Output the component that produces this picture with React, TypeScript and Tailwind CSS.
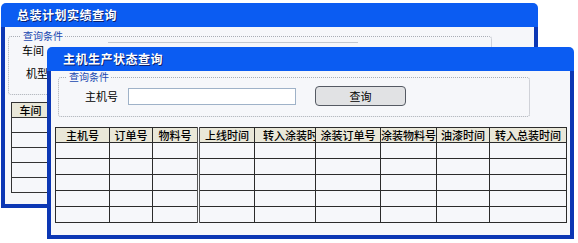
import React from 'react';

const cjk = "font-['Noto_Sans_CJK_SC','Noto_Sans',sans-serif]";

const frontCols = [
  { name: '主机号', w: 'w-[54px]' },
  { name: '订单号', w: 'w-[43px]' },
  { name: '物料号', w: 'w-[46px]' },
  { name: '上线时间', w: 'w-[56px]' },
  { name: '转入涂装时间', w: 'w-[61px]' },
  { name: '涂装订单号', w: 'w-[65px]' },
  { name: '涂装物料号', w: 'w-[56px]' },
  { name: '油漆时间', w: 'w-[53px]' },
  { name: '转入总装时间', w: 'w-[77px]' },
];

const rows = [0, 1, 2, 3, 4];

function TitleBar({ title }: { title: string }) {
  return (
    <div className="h-[24px] shrink-0 rounded-t-[5px] bg-[#0b5cf2] flex items-center pl-[16px]">
      <span className="text-[12px] font-bold text-white tracking-[0.5px] [text-shadow:1px_1px_0_#0a1f6e]">
        {title}
      </span>
    </div>
  );
}

function Legend({ text, className }: { text: string; className: string }) {
  return (
    <legend className={`px-[2px] text-[10px] leading-[10px] text-[#2047b0] ${className}`}>{text}</legend>
  );
}

export default function App() {
  return (
    <div className={`relative w-[578px] h-[243px] bg-white overflow-hidden ${cjk}`}>
      {/* 总装计划实绩查询 (back window) */}
      <div className="absolute left-[1px] top-[3px] w-[537px] h-[205px] flex flex-col">
        <TitleBar title="总装计划实绩查询" />
        <div className="flex-1 bg-[#f6f7fa] border-x-[4px] border-b-[4px] border-[#0c37b4] pl-[3px] pt-[4px] flex flex-col items-start">
          <fieldset className="w-[484px] h-[64px] border border-dotted border-[#a9adb5] rounded-[3px] px-0">
            <Legend text="查询条件" className="ml-[12px]" />
            <div className="flex items-center h-[16px] mt-[1px] pl-[13px] text-[11px] text-black">
              <span className="w-[86px]">车间</span>
              <div className="w-[250px] h-[16px] border-t border-[#c4c8ce]" />
            </div>
            <div className="flex items-center h-[16px] mt-[7px] pl-[17px] text-[11px] text-black">机型</div>
          </fieldset>
          <table className="mt-[7px] ml-[3px] w-[200px] table-fixed border-collapse text-[11px] text-black">
            <thead>
              <tr className="h-[15px]">
                <th className="w-[38px] border border-[#333] bg-[#e9e7d8] font-medium text-center leading-[13px]">车间</th>
                <th className="border border-[#333] bg-[#e9e7d8]" />
              </tr>
            </thead>
            <tbody>
              {rows.map((r) => (
                <tr key={r} className="h-[15px]">
                  <td className="border border-[#333]" />
                  <td className="border border-[#333]" />
                </tr>
              ))}
            </tbody>
          </table>
        </div>
      </div>

      {/* 主机生产状态查询 (front window) */}
      <div className="absolute left-[47px] top-[47px] w-[527px] h-[192px] flex flex-col">
        <TitleBar title="主机生产状态查询" />
        <div className="flex-1 bg-[#f6f7fa] border-x-[4px] border-b-[4px] border-[#0c37b4] pt-[1px] flex flex-col">
          <fieldset className="ml-[7px] w-[472px] h-[45px] border border-dotted border-[#a9adb5] rounded-[3px] px-0">
            <Legend text="查询条件" className="ml-[8px]" />
            <div className="flex items-center pl-[26px] mt-[4px] text-[11px] text-black">
              <span className="w-[43px]">主机号</span>
              <div className="w-[168px] h-[17px] bg-white border border-[#9fb2c8]" />
              <button className="ml-[19px] w-[91px] h-[20px] rounded-[4px] border border-[#555a63] bg-[#e1e2e4] text-[11px] text-black leading-none">
                查询
              </button>
            </div>
          </fieldset>
          <table className="mt-[10px] ml-[4px] w-[512px] table-fixed border-collapse text-[11px] text-black">
            <thead>
              <tr className="h-[15px]">
                {frontCols.map((c, i) => (
                  <th
                    key={c.name}
                    className={`${c.w} border border-[#2b2b2b] bg-[#e9e7d8] font-medium leading-[13px] whitespace-nowrap overflow-hidden ${
                      i === 4 ? 'text-left pl-[8px]' : 'text-center'
                    } ${i === 3 ? 'border-l-[3px] border-l-[#555] border-double' : ''}`}
                  >
                    {c.name}
                  </th>
                ))}
              </tr>
            </thead>
            <tbody>
              {rows.map((r) => (
                <tr key={r} className="h-[16px]">
                  {frontCols.map((c, i) => (
                    <td
                      key={c.name}
                      className={`border border-[#2b2b2b] ${i === 3 ? 'border-l-[3px] border-l-[#555] border-double' : ''}`}
                    />
                  ))}
                </tr>
              ))}
            </tbody>
          </table>
        </div>
      </div>
    </div>
  );
}
